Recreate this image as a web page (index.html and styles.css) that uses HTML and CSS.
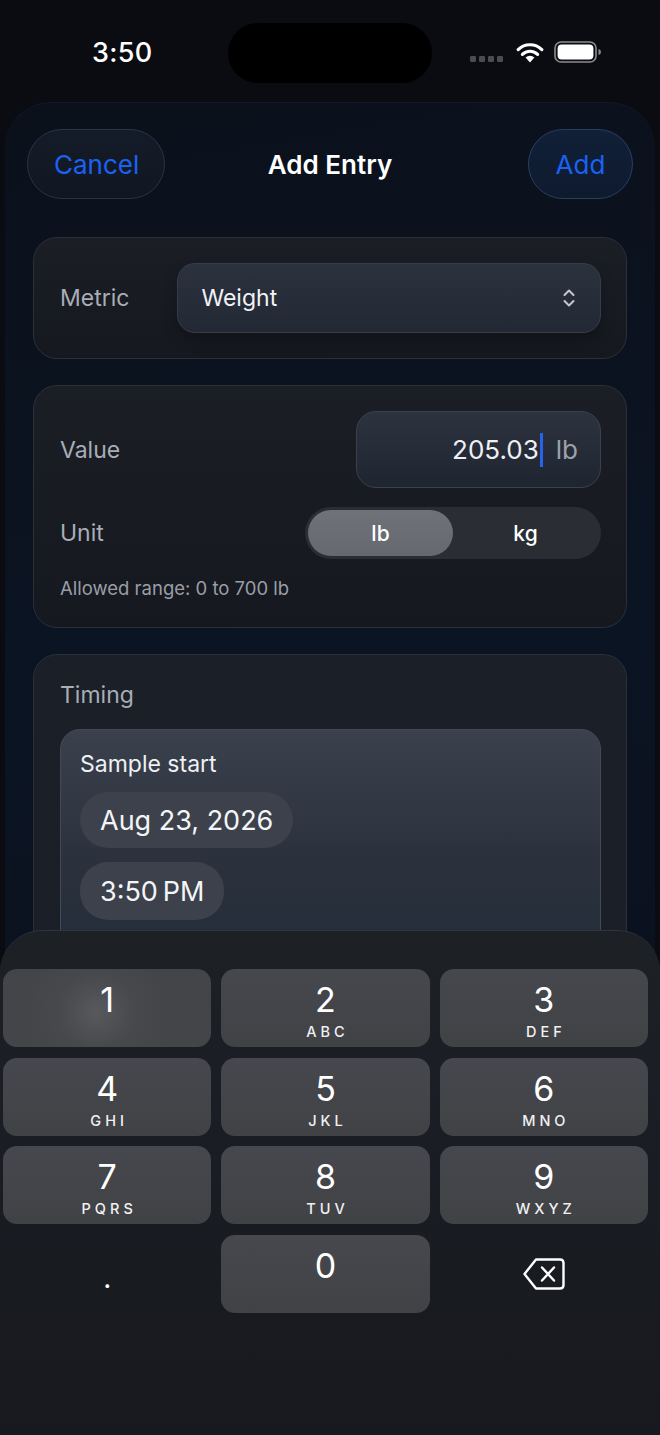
FILE: index.html
```html
<!DOCTYPE html>
<html lang="en">
<head>
    <meta charset="UTF-8" />
    <title>Add Entry</title>
    <link rel="stylesheet" href="styles.css">
</head>
<body>

<!-- Status bar -->
<div class="status-bar">
    <span class="clock">3:50</span>
    <div class="island"></div>
    <div class="status-icons">
        <svg class="signal" width="34" height="8" viewBox="0 0 34 8">
            <rect x="0" y="1" width="6" height="6" rx="1.2" fill="#4a4c52"/>
            <rect x="9" y="1" width="6" height="6" rx="1.2" fill="#4a4c52"/>
            <rect x="18" y="1" width="6" height="6" rx="1.2" fill="#4a4c52"/>
            <rect x="27" y="1" width="6" height="6" rx="1.2" fill="#4a4c52"/>
        </svg>
        <svg class="wifi" width="28" height="21" viewBox="0 0 28 21">
            <path d="M14 20.5 L9.6 15.6 A6.4 6.4 0 0 1 18.4 15.6 Z" fill="#fff"/>
            <path d="M6.4 12.4 A10.8 10.8 0 0 1 21.6 12.4" stroke="#fff" stroke-width="3.2" fill="none" stroke-linecap="round"/>
            <path d="M2.2 7.6 A16.8 16.8 0 0 1 25.8 7.6" stroke="#fff" stroke-width="3.2" fill="none" stroke-linecap="round"/>
        </svg>
        <svg class="battery" width="48" height="22" viewBox="0 0 48 22">
            <rect x="1" y="1" width="41" height="20" rx="6" fill="none" stroke="#8a8c90" stroke-width="1.6"/>
            <rect x="3.6" y="3.6" width="35.8" height="14.8" rx="4" fill="#fff"/>
            <path d="M44.5 8 Q47 8.5 47 11 Q47 13.5 44.5 14 Z" fill="#8a8c90"/>
        </svg>
    </div>
</div>

<!-- Sheet -->
<div class="sheet">
    <div class="nav">
        <button class="nav-btn cancel">Cancel</button>
        <h1 class="nav-title">Add Entry</h1>
        <button class="nav-btn add">Add</button>
    </div>

    <div class="card metric-card">
        <span class="label">Metric</span>
        <div class="picker">
            <span>Weight</span>
            <svg class="chevrons" width="14" height="20" viewBox="0 0 14 20">
                <path d="M2.5 7 L7 2.5 L11.5 7" stroke="#c4c8d0" stroke-width="2" fill="none" stroke-linecap="round" stroke-linejoin="round"/>
                <path d="M2.5 13 L7 17.5 L11.5 13" stroke="#c4c8d0" stroke-width="2" fill="none" stroke-linecap="round" stroke-linejoin="round"/>
            </svg>
        </div>
    </div>

    <div class="card value-card">
        <div class="row">
            <span class="label">Value</span>
            <div class="value-input">
                <span class="value-text">205.03</span><span class="caret"></span><span class="value-unit">lb</span>
            </div>
        </div>
        <div class="row unit-row">
            <span class="label">Unit</span>
            <div class="segmented">
                <span class="seg active">lb</span>
                <span class="seg">kg</span>
            </div>
        </div>
        <p class="hint">Allowed range: 0 to 700 lb</p>
    </div>

    <div class="card timing-card">
        <span class="label">Timing</span>
        <div class="inner-card">
            <span class="inner-title">Sample start</span>
            <span class="pill date-pill">Aug 23, 2026</span>
            <span class="pill time-pill">3:50&#8201;PM</span>
        </div>
    </div>
</div>

<!-- Keypad -->
<div class="keyboard">
    <div class="keys">
        <div class="key pressed"><span class="digit">1</span><span class="letters">&nbsp;</span></div>
        <div class="key"><span class="digit">2</span><span class="letters">ABC</span></div>
        <div class="key"><span class="digit">3</span><span class="letters">DEF</span></div>
        <div class="key"><span class="digit">4</span><span class="letters">GHI</span></div>
        <div class="key"><span class="digit">5</span><span class="letters">JKL</span></div>
        <div class="key"><span class="digit">6</span><span class="letters">MNO</span></div>
        <div class="key"><span class="digit">7</span><span class="letters">PQRS</span></div>
        <div class="key"><span class="digit">8</span><span class="letters">TUV</span></div>
        <div class="key"><span class="digit">9</span><span class="letters">WXYZ</span></div>
        <div class="key plain"><span class="dot">.</span></div>
        <div class="key"><span class="digit">0</span><span class="letters">&nbsp;</span></div>
        <div class="key plain">
            <svg width="44" height="34" viewBox="0 0 44 34">
                <path d="M14 2.5 H38 Q41.5 2.5 41.5 6 V28 Q41.5 31.5 38 31.5 H14 L2.5 17 Z" stroke="#fff" stroke-width="2.4" fill="none" stroke-linejoin="round"/>
                <path d="M20 10.5 L32 23.5 M32 10.5 L20 23.5" stroke="#fff" stroke-width="2.4" stroke-linecap="round"/>
            </svg>
        </div>
    </div>
</div>

</body>
</html>
```

FILE: styles.css
```css
body {
    font-family: Inter, "Noto Sans", sans-serif;
    background-color: #0a0c11;
    color: #fff;
    margin: 0;
    padding: 0;
    width: 660px;
    height: 1435px;
    overflow: hidden;
    position: relative;
}

/* Status bar */
.status-bar {
    height: 102px;
    display: flex;
    align-items: flex-start;
    position: relative;
}

.clock {
    font-size: 27px;
    font-weight: 500;
    margin: 36px 0 0 92px;
    letter-spacing: 0.3px;
}

.island {
    position: absolute;
    left: 228px;
    top: 23px;
    width: 204px;
    height: 60px;
    border-radius: 30px;
    background: #000;
}

.status-icons {
    margin: 41px 0 0 auto;
    padding-right: 58px;
    display: flex;
    align-items: center;
    gap: 10px;
}

.signal {
    margin-top: 14px;
    margin-right: 2px;
}

/* Sheet */
.sheet {
    margin: 0 5px;
    height: 1400px;
    border-radius: 46px 46px 0 0;
    background: linear-gradient(170deg, #0b111b 0%, #0b1423 40%, #0a0f18 100%);
    box-shadow: inset 0 1px 0 rgba(40, 70, 120, 0.15);
    padding: 27px 28px 0 28px;
    box-sizing: border-box;
}

.nav {
    display: flex;
    align-items: center;
    justify-content: space-between;
    height: 70px;
    margin: 0 -6px 38px -6px;
    position: relative;
}

.nav-btn {
    height: 70px;
    border-radius: 35px;
    font-family: inherit;
    font-size: 26px;
    color: #1a62f4;
    padding: 0 26px;
    cursor: pointer;
}

.cancel {
    width: 138px;
    background: linear-gradient(180deg, #151c29, #101722);
    border: 1.5px solid #2a3345;
}

.add {
    width: 105px;
    background: linear-gradient(180deg, #112038, #0e1a2e);
    border: 1.5px solid #2a3e62;
}

.nav-title {
    position: absolute;
    left: 0;
    right: 0;
    text-align: center;
    margin: 0;
    font-size: 26px;
    font-weight: 600;
    pointer-events: none;
}

/* Cards */
.card {
    background: linear-gradient(180deg, #1b1e25, #15181f);
    border: 1.5px solid #2b2f38;
    border-radius: 24px;
    margin-bottom: 26px;
    box-sizing: border-box;
}

.label {
    font-size: 23px;
    color: #a9adb6;
}

.metric-card {
    height: 122px;
    display: flex;
    align-items: center;
    padding: 0 25px 0 26px;
    gap: 48px;
}

.picker {
    flex: 1;
    height: 70px;
    border-radius: 18px;
    background: linear-gradient(180deg, #2b323e, #222834);
    border: 1.5px solid #363d4a;
    box-sizing: border-box;
    display: flex;
    align-items: center;
    justify-content: space-between;
    padding: 0 24px 0 23px;
    font-size: 23px;
    color: #f2f3f6;
    box-shadow: 0 6px 14px rgba(0, 0, 0, 0.25);
}

.value-card {
    height: 243px;
    padding: 25px 25px 0 26px;
}

.row {
    display: flex;
    align-items: center;
    justify-content: space-between;
}

.value-input {
    width: 245px;
    height: 77px;
    border-radius: 20px;
    background: linear-gradient(180deg, #2c333f, #1f2530);
    border: 1.5px solid #3a414e;
    box-sizing: border-box;
    display: flex;
    align-items: center;
    justify-content: flex-end;
    padding-right: 22px;
    font-size: 26px;
}

.value-text {
    color: #eef0f4;
}

.caret {
    width: 3px;
    height: 34px;
    background: #2563eb;
    margin: 0 13px 0 1px;
}

.value-unit {
    color: #9ca1ab;
}

.unit-row {
    margin-top: 19px;
}

.segmented {
    width: 296px;
    height: 52px;
    border-radius: 26px;
    background: #2a2d34;
    display: flex;
    padding: 3px;
    box-sizing: border-box;
}

.seg {
    flex: 1;
    display: flex;
    align-items: center;
    justify-content: center;
    font-size: 21px;
    font-weight: 500;
    border-radius: 23px;
}

.seg.active {
    background: linear-gradient(180deg, #6f7279, #65686f);
}

.hint {
    margin: 18px 0 0;
    font-size: 18.5px;
    color: #9a9ea7;
}

.timing-card {
    height: 400px;
    padding: 26px 25px 0 26px;
    background: linear-gradient(180deg, #1b1f27, #1a1f28);
}

.inner-card {
    margin-top: 20px;
    height: 340px;
    border-radius: 20px;
    background: linear-gradient(180deg, #3a404c 0%, #2a313d 40%, #1f2836 100%);
    border: 1.5px solid #434a57;
    padding: 20px 19px;
    box-sizing: border-box;
    display: flex;
    flex-direction: column;
    align-items: flex-start;
}

.inner-title {
    font-size: 23px;
    color: #eef0f3;
    margin-bottom: 14px;
}

.pill {
    height: 56px;
    border-radius: 28px;
    background: #3c414c;
    display: flex;
    align-items: center;
    padding: 0 20px;
    font-size: 27px;
    color: #f4f5f7;
    margin-bottom: 14px;
}

.time-pill {
    height: 58px;
}

/* Keypad */
.keyboard {
    position: absolute;
    left: 0;
    right: 0;
    bottom: 0;
    height: 505px;
    border-radius: 42px 42px 0 0;
    background: linear-gradient(180deg, #1d2025 0%, #1a1d23 40%, #17191e 100%);
    border-top: 1px solid #30343b;
    padding: 38px 12px 0 3px;
    box-sizing: border-box;
}

.keys {
    display: grid;
    grid-template-columns: repeat(3, 1fr);
    grid-auto-rows: 78px;
    column-gap: 10px;
    row-gap: 10.5px;
}

.key {
    border-radius: 14px;
    background: linear-gradient(180deg, #46484d, #404246);
    display: flex;
    flex-direction: column;
    align-items: center;
    padding-top: 12px;
    box-sizing: border-box;
}

.key.pressed {
    background: radial-gradient(circle at 45% 55%, #58595c 0%, #47494d 30%, #434549 60%);
}

.key.plain {
    background: none;
    justify-content: center;
    padding-top: 0;
}

.digit {
    font-size: 34px;
    line-height: 38px;
    color: #fff;
}

.letters {
    font-size: 14.5px;
    font-weight: 500;
    letter-spacing: 4px;
    margin-right: -4px;
    line-height: 18px;
    margin-top: 4px;
    color: #f0f0f2;
}

.dot {
    font-size: 28px;
    line-height: 20px;
    margin-top: 8px;
}
```
